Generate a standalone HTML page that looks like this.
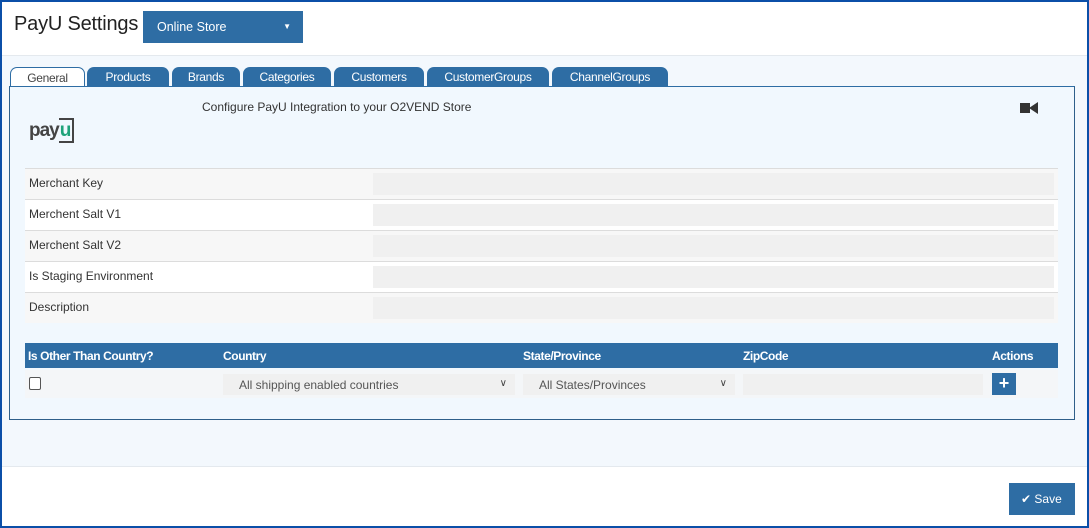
<!DOCTYPE html>
<html><head><style>
*{margin:0;padding:0;box-sizing:border-box}
body{width:1089px;height:528px;overflow:hidden;font-family:"Liberation Sans",sans-serif;background:#0b4fa8;position:relative}
.a{position:absolute}
#pg{left:2px;top:2px;width:1085px;height:524px;background:#fff}
.tab{position:absolute;top:67px;height:20px;background:#2e6da4;color:#fff;font-size:12px;text-align:center;line-height:20px;border-radius:7px 7px 0 0;letter-spacing:-.3px}
.row{position:absolute;left:25px;width:1033px;height:31px;border-top:1px solid #dcdcdc;font-size:12px;color:#333;padding:7px 0 0 4px}
.inp{position:absolute;left:348px;top:4px;width:681px;height:22px;background:#f0f0f0}
.th{position:absolute;top:349px;color:#fff;font-size:12px;font-weight:bold;letter-spacing:-.4px}
.sel{position:absolute;top:374px;height:21px;background:#f0f0f0;font-size:12px;color:#555;padding:4px 0 0 16px}
.sel span{position:absolute;right:8px;top:4px;font-size:10px;color:#444}
</style></head><body>
<div id="pg" class="a"></div>
<div class="a" style="left:2px;top:55px;width:1085px;height:412px;background:#f3f8fd;border-top:1px solid #e4e9ee;border-bottom:1px solid #e4e9ee"></div>
<div class="a" style="left:14px;top:13px;font-size:20px;color:#222;letter-spacing:-.2px">PayU Settings</div>
<div class="a" style="left:143px;top:11px;width:160px;height:32px;background:#2e6da4;color:#fff;font-size:12.5px;padding:9px 0 0 14px">Online Store<span style="position:absolute;right:12px;top:11px;font-size:8px">▼</span></div>
<div class="tab" style="left:10px;width:75px;background:#fff;color:#444;border:1px solid #2e6da4;border-bottom:none">General</div>
<div class="tab" style="left:87px;width:82px">Products</div>
<div class="tab" style="left:172px;width:68px">Brands</div>
<div class="tab" style="left:243px;width:88px">Categories</div>
<div class="tab" style="left:334px;width:90px">Customers</div>
<div class="tab" style="left:427px;width:122px">CustomerGroups</div>
<div class="tab" style="left:552px;width:116px">ChannelGroups</div>
<div class="a" style="left:9px;top:86px;width:1066px;height:334px;border:1px solid #2e5f8a;border-top-color:#2e6da4;background:#f1f8fe"></div>
<div class="a" style="left:202px;top:100px;font-size:12px;color:#333">Configure PayU Integration to your O2VEND Store</div>
<div class="a" style="left:29px;top:120px;font-size:19px;font-weight:bold;color:#444;letter-spacing:-1px">pay<span style="color:#1fa37a;border:2px solid #444;border-left:none;padding:0 2px 0 1px">u</span></div>
<div class="a" style="left:1020px;top:103px;width:10px;height:10px;background:#333"></div>
<div class="a" style="left:1029px;top:102px;width:0;height:0;border-top:6px solid transparent;border-bottom:6px solid transparent;border-right:9px solid #333"></div>
<div class="row" style="top:168px;background:#f7f7f7">Merchant Key<div class="inp"></div></div>
<div class="row" style="top:199px;background:#fff">Merchent Salt V1<div class="inp"></div></div>
<div class="row" style="top:230px;background:#f7f7f7">Merchent Salt V2<div class="inp"></div></div>
<div class="row" style="top:261px;background:#fff">Is Staging Environment<div class="inp"></div></div>
<div class="row" style="top:292px;background:#f7f7f7">Description<div class="inp"></div></div>
<div class="a" style="left:25px;top:343px;width:1033px;height:25px;background:#2e6da4"></div>
<div class="th" style="left:28px">Is Other Than Country?</div>
<div class="th" style="left:223px">Country</div>
<div class="th" style="left:523px">State/Province</div>
<div class="th" style="left:743px">ZipCode</div>
<div class="th" style="left:992px">Actions</div>
<div class="a" style="left:25px;top:370px;width:1033px;height:28px;background:#f4f6f8"></div>
<div class="a" style="left:29px;top:377px;width:12px;height:13px;border:1px solid #555;border-radius:2px;background:#fff"></div>
<div class="sel" style="left:223px;width:292px">All shipping enabled countries<span>∨</span></div>
<div class="sel" style="left:523px;width:212px">All States/Provinces<span>∨</span></div>
<div class="a" style="left:743px;top:374px;width:240px;height:21px;background:#f0f0f0"></div>
<div class="a" style="left:992px;top:373px;width:24px;height:22px;background:#2e6da4;color:#fff;font-weight:bold;font-size:18px;text-align:center;line-height:21px">+</div>
<div class="a" style="left:1009px;top:483px;width:66px;height:32px;background:#2e6da4;color:#fff;font-size:12px;padding:9px 0 0 12px">✔ Save</div>
</body></html>
